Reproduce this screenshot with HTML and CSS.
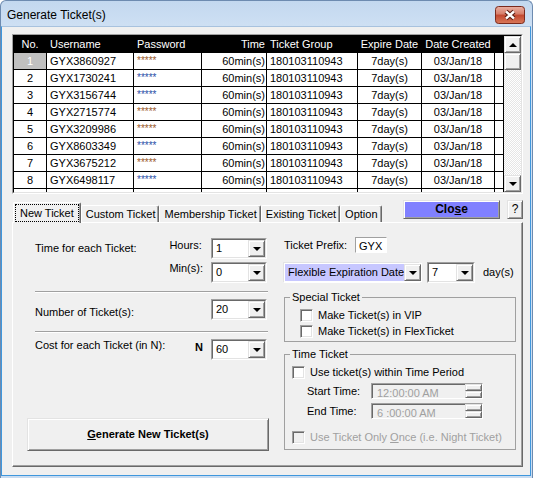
FILE: index.html
```html
<!DOCTYPE html>
<html lang="en">
<head>
  <meta charset="UTF-8">
  <meta name="viewport" content="width=device-width, initial-scale=1.0">
  <title>Generate Ticket(s)</title>
  <link rel="stylesheet" href="styles.css">
</head>
<body>
  <div class="window">
    <div class="titlebar">
      <span class="title">Generate Ticket(s)</span>
      <span class="close-x">
        <svg width="30" height="18" viewBox="0 0 30 18">
          <defs>
            <linearGradient id="cg" x1="0" y1="0" x2="0" y2="1">
              <stop offset="0" stop-color="#eab1a4"/>
              <stop offset=".45" stop-color="#d67d69"/>
              <stop offset=".5" stop-color="#c2472f"/>
              <stop offset="1" stop-color="#d9795a"/>
            </linearGradient>
          </defs>
          <rect x=".5" y=".5" width="29" height="17" rx="3" fill="url(#cg)" stroke="#7a2a1d"/>
          <path d="M11 5.5 L19 12.5 M19 5.5 L11 12.5" stroke="#5a1c12" stroke-width="4.4"/>
          <path d="M11 5.5 L19 12.5 M19 5.5 L11 12.5" stroke="#fff" stroke-width="2.4"/>
        </svg>
      </span>
    </div>

    <div class="client">
      <!-- ticket list -->
      <div class="grid">
        <div class="grid-view">
          <table class="tickets">
            <colgroup>
              <col style="width:33px"><col style="width:87px"><col style="width:68px"><col style="width:65px">
              <col style="width:91px"><col style="width:64px"><col style="width:73px"><col style="width:9px">
            </colgroup>
            <thead>
              <tr><th class="c">No.</th><th>Username</th><th>Password</th><th class="r">Time</th><th>Ticket Group</th><th class="c">Expire Date</th><th class="c">Date Created</th><th></th></tr>
            </thead>
            <tbody>
              <tr><td class="c sel">1</td><td>GYX3860927</td><td class="pw pw-a">*****</td><td class="r">60min(s)</td><td>180103110943</td><td class="c">7day(s)</td><td class="c">03/Jan/18</td><td></td></tr>
              <tr><td class="c">2</td><td>GYX1730241</td><td class="pw pw-b">*****</td><td class="r">60min(s)</td><td>180103110943</td><td class="c">7day(s)</td><td class="c">03/Jan/18</td><td></td></tr>
              <tr><td class="c">3</td><td>GYX3156744</td><td class="pw pw-b">*****</td><td class="r">60min(s)</td><td>180103110943</td><td class="c">7day(s)</td><td class="c">03/Jan/18</td><td></td></tr>
              <tr><td class="c">4</td><td>GYX2715774</td><td class="pw pw-a">*****</td><td class="r">60min(s)</td><td>180103110943</td><td class="c">7day(s)</td><td class="c">03/Jan/18</td><td></td></tr>
              <tr><td class="c">5</td><td>GYX3209986</td><td class="pw pw-a">*****</td><td class="r">60min(s)</td><td>180103110943</td><td class="c">7day(s)</td><td class="c">03/Jan/18</td><td></td></tr>
              <tr><td class="c">6</td><td>GYX8603349</td><td class="pw pw-b">*****</td><td class="r">60min(s)</td><td>180103110943</td><td class="c">7day(s)</td><td class="c">03/Jan/18</td><td></td></tr>
              <tr><td class="c">7</td><td>GYX3675212</td><td class="pw pw-a">*****</td><td class="r">60min(s)</td><td>180103110943</td><td class="c">7day(s)</td><td class="c">03/Jan/18</td><td></td></tr>
              <tr><td class="c">8</td><td>GYX6498117</td><td class="pw pw-b">*****</td><td class="r">60min(s)</td><td>180103110943</td><td class="c">7day(s)</td><td class="c">03/Jan/18</td><td></td></tr>
              <tr><td class="c">9</td><td>GYX5120468</td><td class="pw pw-a">*****</td><td class="r">60min(s)</td><td>180103110943</td><td class="c">7day(s)</td><td class="c">03/Jan/18</td><td></td></tr>
            </tbody>
          </table>
        </div>
        <div class="vscroll">
          <span class="sbtn raised"><i class="arr up"></i></span>
          <span class="thumb raised"></span>
          <span class="track"></span>
          <span class="sbtn raised"><i class="arr"></i></span>
        </div>
      </div>

      <!-- tabs -->
      <div class="tabbar">
        <ul class="tabs">
          <li class="active"><span>New Ticket</span></li>
          <li>Custom Ticket</li>
          <li>Membership Ticket</li>
          <li>Existing Ticket</li>
          <li>Option</li>
        </ul>
        <button class="btn raised close-btn">Clo<u>s</u>e</button>
        <button class="btn raised help-btn">?</button>
      </div>

      <div class="panel">
        <div class="col-left">
          <div class="time-grid">
            <span class="lbl lbl-time">Time for each Ticket:</span>
            <span class="lbl lbl-hours">Hours:</span>
            <div class="combo"><div class="combo-in"><span class="val">1</span><span class="drop raised"><i class="arr"></i></span></div></div>
            <span></span>
            <span class="lbl">Min(s):</span>
            <div class="combo"><div class="combo-in"><span class="val">0</span><span class="drop raised"><i class="arr"></i></span></div></div>
          </div>
          <hr class="sep">
          <div class="field-row">
            <span class="lbl lbl-count">Number of Ticket(s):</span>
            <div class="combo"><div class="combo-in"><span class="val">20</span><span class="drop raised"><i class="arr"></i></span></div></div>
          </div>
          <hr class="sep sep-2">
          <div class="field-row">
            <span class="lbl">Cost for each Ticket (in N):</span>
            <b class="naira">N</b>
            <div class="combo"><div class="combo-in"><span class="val">60</span><span class="drop raised"><i class="arr"></i></span></div></div>
          </div>
          <button class="btn raised gen-btn"><span><u>G</u>enerate New Ticket(s)</span></button>
        </div>

        <div class="col-right">
          <div class="prefix-row">
            <span class="prefix-lbl">Ticket Prefix:</span>
            <span class="prefix-box">GYX</span>
          </div>
          <div class="exp-row">
            <div class="combo combo-flex"><div class="combo-in"><span class="val">Flexible Expiration Date</span><span class="drop raised"><i class="arr"></i></span></div></div>
            <div class="combo combo-days"><div class="combo-in"><span class="val">7</span><span class="drop raised"><i class="arr"></i></span></div></div>
            <span class="days">day(s)</span>
          </div>

          <fieldset class="group group-special">
            <legend>Special Ticket</legend>
            <label class="check"><span class="chk"></span><span>Make Ticket(s) in VIP</span></label>
            <label class="check"><span class="chk"></span><span>Make Ticket(s) in FlexTicket</span></label>
          </fieldset>

          <fieldset class="group group-time">
            <legend>Time Ticket</legend>
            <label class="check"><span class="chk"></span><span>Use ticket(s) within Time Period</span></label>
            <div class="time-row">
              <span class="time-lbl">Start Time:</span>
              <span class="time-box"><span class="time-val">12:00:00 AM</span><span class="spin"><i class="raised"></i><i class="raised"></i></span></span>
            </div>
            <div class="time-row time-row-2">
              <span class="time-lbl">End Time:</span>
              <span class="time-box"><span class="time-val">6 :00:00 AM</span><span class="spin"><i class="raised"></i><i class="raised"></i></span></span>
            </div>
            <label class="check check-off"><span class="chk"></span><span>Use Ticket Only <u>O</u>nce (i.e. Night Ticket)</span></label>
          </fieldset>
        </div>
      </div>
    </div>
  </div>
</body>
</html>
```

FILE: styles.css
```css
*{
  margin: 0;
  padding: 0;
  box-sizing: border-box;
  list-style: none;
}
body{
  width: 533px;
  height: 478px;
  overflow: hidden;
  background: #fff;
  font: 11px/13px "Liberation Sans", Arial, sans-serif;
  color: #000;
}
button{
  font: inherit;
  color: #000;
}

/* window frame */
.window{
  width: 533px;
  height: 478px;
  display: flex;
  flex-direction: column;
  padding: 0 1px 2px 0;
  border: 1px solid #6d8bb0;
  border-bottom: 0;
  border-radius: 6px 6px 0 0;
  background: linear-gradient(#c3d8ef, #d0e1f4 30px, #c9dcf1);
}
.titlebar{
  height: 25px;
  flex: none;
  display: flex;
  align-items: center;
  justify-content: space-between;
  padding: 3px 6px 0 6px;
  font-size: 12px;
}
.close-x{
  display: flex;
  margin-top: -1px;
}
.close-x svg{
  display: block;
}
.client{
  flex: 1;
  display: flex;
  flex-direction: column;
  background: #f0f0f0;
  border: 1px solid #3f97dd;
  border-top-color: #a8c2de;
  padding: 7px 7px 8px 10px;
}

/* 3d looks */
.raised{
  background: #f0f0f0;
  border: 1px solid;
  border-color: #e3e3e3 #696969 #696969 #e3e3e3;
  box-shadow: inset 1px 1px #fff, inset -1px -1px #a0a0a0;
}
.arr{
  display: block;
  width: 0;
  height: 0;
  border-style: solid;
  border-width: 4px 4px 0;
  border-color: #000 transparent transparent;
}
.arr.up{
  border-width: 0 4px 4px;
  border-color: transparent transparent #000;
}

/* grid */
.grid{
  height: 160px;
  flex: none;
  display: flex;
  border: 1px solid;
  border-color: #a0a0a0 #fff #fff #a0a0a0;
}
.grid-view{
  width: 491px;
  border-left: 1px solid #000;
  border-top: 1px solid #000;
  border-bottom: 1px solid #e3e3e3;
  overflow: hidden;
  background: #fff;
}
.tickets{
  width: 490px;
  table-layout: fixed;
  border-collapse: separate;
  border-spacing: 0;
}
.tickets th,
.tickets td{
  line-height: 16px;
  padding: 0 1px 0 3px;
  border-right: 1px solid #000;
  border-bottom: 1px solid #000;
  white-space: nowrap;
  overflow: hidden;
  text-align: left;
  font-weight: normal;
}
.tickets th{
  background: #000;
  color: #fff;
}
.tickets .c{
  text-align: center;
  padding: 0;
}
.tickets .r{
  text-align: right;
}
.tickets .sel{
  background: #c0c0c0;
  color: #fff;
}
.tickets .pw{
  font-size: 10px;
}
.pw-a{
  color: #9a5a2a;
}
.pw-b{
  color: #2a50a8;
}
.vscroll{
  width: 18px;
  display: flex;
  flex-direction: column;
  border-top: 1px solid #000;
  border-bottom: 1px solid #e3e3e3;
  border-right: 1px solid #e3e3e3;
}
.sbtn{
  height: 17px;
  display: flex;
  align-items: center;
  justify-content: center;
}
.thumb{
  height: 17px;
}
.track{
  flex: 1;
  background: repeating-conic-gradient(#e6e6e6 0 25%, #fff 0 50%) 0 0 / 2px 2px;
}

/* tabs */
.tabbar{
  height: 22px;
  margin-top: 6px;
  flex: none;
  display: flex;
  padding-left: 1px;
}
.tabs{
  display: flex;
  align-items: flex-end;
  margin-right: auto;
}
.tabs li{
  height: 17px;
  line-height: 16px;
  padding: 0 3px 0 4px;
  border: 1px solid;
  border-bottom: 0;
  border-color: #fff #696969 #fff #fff;
  border-radius: 2px 2px 0 0;
  box-shadow: inset -1px 0 #a0a0a0;
  white-space: nowrap;
}
.tabs li.active{
  position: relative;
  z-index: 1;
  height: 21px;
  margin-bottom: -1px;
  padding: 1px 1px 0 1px;
  background: #f0f0f0;
}
.tabs li.active span{
  display: block;
  height: 18px;
  line-height: 16px;
  padding: 0 4px;
  border: 1px dotted #000;
}
.btn{
  display: flex;
  align-items: center;
  justify-content: center;
  cursor: default;
}
.close-btn{
  width: 97px;
  height: 19px;
  margin-right: 7px;
  background: #8080ff;
  font-weight: bold;
  font-size: 12px;
}
.help-btn{
  width: 16px;
  height: 19px;
  font-size: 12px;
}

/* tab page */
.panel{
  height: 245px;
  flex: none;
  display: flex;
  gap: 14px;
  padding-left: 14px;
  border: 1px solid;
  border-color: #fff #696969 #696969 #fff;
  box-shadow: inset -1px -1px #a0a0a0;
  background: #f0f0f0;
}
.col-left{
  width: 242px;
  display: flex;
  flex-direction: column;
  padding-top: 15px;
}
.time-grid{
  display: grid;
  grid-template-columns: 1fr auto 56px;
  grid-auto-rows: 21px;
  row-gap: 3px;
  column-gap: 8px;
  padding: 0 2px 0 8px;
}
.lbl-time{
  padding-top: 4px;
}
.lbl-hours{
  padding-top: 1px;
}
.combo{
  height: 21px;
  width: 56px;
  display: flex;
  border: 1px solid;
  border-color: #a0a0a0 #fff #fff #a0a0a0;
}
.combo-in{
  flex: 1;
  display: flex;
  border: 1px solid;
  border-color: #696969 #e3e3e3 #e3e3e3 #696969;
  background: #fff;
}
.combo .val{
  flex: 1;
  padding-left: 3px;
  line-height: 17px;
  white-space: nowrap;
  overflow: hidden;
}
.drop{
  width: 17px;
  display: flex;
  align-items: center;
  justify-content: center;
}
.sep{
  height: 2px;
  margin: 8px 1px 0 8px;
  border: 0;
  border-top: 1px solid #a0a0a0;
  border-bottom: 1px solid #fff;
}
.sep-2{
  margin-top: 11px;
}
.field-row{
  display: flex;
  height: 21px;
  margin-top: 6px;
  padding: 0 2px 0 8px;
}
.field-row .lbl{
  flex: 1;
}
.lbl-count{
  padding-top: 7px;
}
.naira{
  margin: 2px 8px 0 0;
  font-weight: bold;
}
.gen-btn{
  height: 33px;
  margin-top: 58px;
  font-weight: bold;
}

.col-right{
  width: 233px;
  padding-top: 14px;
}
.prefix-row{
  display: flex;
  height: 16px;
  line-height: 16px;
}
.prefix-lbl{
  width: 72px;
  padding-left: 1px;
}
.prefix-box{
  width: 32px;
  padding: 1px 0 0 3px;
  line-height: 15px;
  background: #fff;
  border: 1px solid;
  border-color: #a0a0a0 #fff #fff #a0a0a0;
}
.exp-row{
  display: flex;
  gap: 7px;
  height: 21px;
  margin-top: 9px;
}
.combo-flex{
  width: 137px;
  border-color: #e3e3e3 #fff #fff #e3e3e3;
}
.combo-flex .combo-in{
  background: #c7c7ff;
  border-color: #fff;
}
.combo-days{
  width: 48px;
}
.days{
  line-height: 21px;
  margin-left: 1px;
}

.group{
  margin-left: 1px;
  width: 232px;
  border: 1px solid #a0a0a0;
  padding: 3px 0 2px 0;
}
.group legend{
  margin-left: 5px;
  padding: 0 2px;
  line-height: 13px;
}
.group-special{
  margin-top: 8px;
  padding-left: 15px;
}
.group-special legend{
  margin-left: -10px;
}
.group-time{
  margin-top: 6px;
  padding: 3px 0 4px 7px;
}
.group-time legend{
  margin-left: -2px;
}
.check{
  display: flex;
  align-items: center;
  height: 16px;
  white-space: nowrap;
}
.chk{
  width: 13px;
  height: 13px;
  margin-right: 5px;
  flex: none;
  background: #fff;
  border: 1px solid;
  border-color: #a0a0a0 #fff #fff #a0a0a0;
  box-shadow: inset 1px 1px #696969, inset -1px -1px #e3e3e3;
}
.check-off{
  margin-top: 10px;
  color: #a0a0a0;
}
.check-off .chk{
  background: #f0f0f0;
}
.time-row{
  display: flex;
  height: 16px;
  margin-top: 3px;
}
.time-row-2{
  margin-top: 4px;
}
.time-lbl{
  width: 79px;
  padding-left: 15px;
  line-height: 16px;
  white-space: nowrap;
}
.time-box{
  width: 112px;
  display: flex;
  border: 1px solid;
  border-color: #a0a0a0 #fff #fff #a0a0a0;
  box-shadow: inset 1px 1px #696969;
}
.time-val{
  flex: 1;
  padding: 3px 0 0 5px;
  color: #a0a0a0;
  line-height: 12px;
}
.spin{
  width: 17px;
  display: flex;
  flex-direction: column;
}
.spin i{
  flex: 1;
}
```
